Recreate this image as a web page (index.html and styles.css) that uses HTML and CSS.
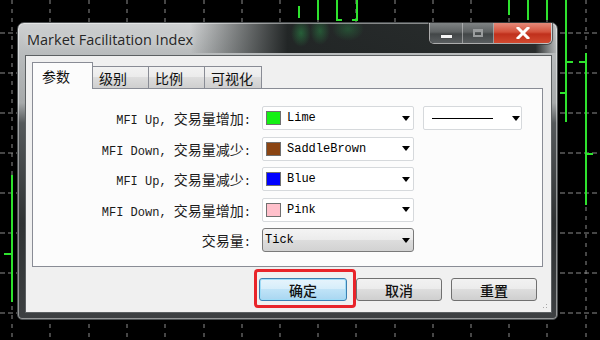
FILE: index.html
```html
<!DOCTYPE html>
<html lang="zh">
<head>
  <meta charset="UTF-8">
  <meta name="viewport" content="width=device-width, initial-scale=1.0">
  <link rel="stylesheet" href="styles.css">
  <title>Market Facilitation Index</title>
</head>
<body>
  <div class="desk">
    <svg class="chart" width="600" height="340" viewBox="0 0 600 340">
      <path class="grid-v" d="M12 0V340M50 0V340M89 0V340M127 0V340M165 0V340M204 0V340M242 0V340M280 0V340M318 0V340M356 0V340M395 0V340M433 0V340M471 0V340M509 0V340M547 0V340M586 0V340"/>
      <path class="grid-h" d="M0 33H600M0 73H600M0 113H600M0 153H600M0 193H600M0 233H600M0 273H600M0 313H600"/>
      <path class="bars" d="M299 6V18M318 0V20M337 0V20H342M357 0V20H352M509 0V15M528 0V20M547 0V20M566 0V122M566 62H573M560 93H566M586 53V205M579 62H586M586 154H593M12 175V302M4 254H12"/>
    </svg>

    <div class="window">
      <div class="titlebar">
        <span class="title">Market Facilitation Index</span>
        <div class="caption">
          <span class="capBtn capMin"><i></i></span>
          <span class="capBtn capMax"><i></i></span>
          <span class="capBtn capClose">
            <svg width="14" height="12" viewBox="0 0 14 12"><path d="M2 1L12 11M12 1L2 11"/></svg>
          </span>
        </div>
      </div>

      <div class="client">
        <div class="tabs">
          <span class="tab active">参数</span>
          <span class="tab">级别</span>
          <span class="tab">比例</span>
          <span class="tab wide">可视化</span>
        </div>

        <div class="panel">
          <div class="row">
            <label class="lbl"><span class="lat">MFI Up, </span>交易量增加<span class="lat">:</span></label>
            <div class="combo">
              <span class="swatch lime"></span><span class="val">Lime</span><span class="arrow"></span>
            </div>
            <div class="combo lineCombo">
              <span class="line"></span><span class="arrow"></span>
            </div>
          </div>
          <div class="row">
            <label class="lbl"><span class="lat">MFI Down, </span>交易量减少<span class="lat">:</span></label>
            <div class="combo">
              <span class="swatch brown"></span><span class="val">SaddleBrown</span><span class="arrow"></span>
            </div>
          </div>
          <div class="row">
            <label class="lbl"><span class="lat">MFI Up, </span>交易量减少<span class="lat">:</span></label>
            <div class="combo">
              <span class="swatch blue"></span><span class="val">Blue</span><span class="arrow"></span>
            </div>
          </div>
          <div class="row">
            <label class="lbl"><span class="lat">MFI Down, </span>交易量增加<span class="lat">:</span></label>
            <div class="combo">
              <span class="swatch pink"></span><span class="val">Pink</span><span class="arrow"></span>
            </div>
          </div>
          <div class="row">
            <label class="lbl">交易量<span class="lat">:</span></label>
            <div class="combo readonly">
              <span class="val">Tick</span><span class="arrow"></span>
            </div>
          </div>
        </div>

        <div class="buttons">
          <button class="btn default">确定<span class="mark"></span></button>
          <button class="btn">取消</button>
          <button class="btn">重置</button>
        </div>
        <span class="grip"></span>
      </div>
    </div>
  </div>
</body>
</html>
```

FILE: styles.css
```css
* {
  box-sizing: border-box;
}

body {
  margin: 0;
  background-color: #000;
  font-family: "Noto Sans CJK SC", "Liberation Sans", sans-serif;
}

.desk {
  position: relative;
  width: 600px;
  height: 340px;
  overflow: hidden;
  padding: 22px 0 0 17px;
}

.chart {
  position: absolute;
  left: 0;
  top: 0;
}

.grid-v {
  stroke: #8c8c8c;
  stroke-width: 1;
  stroke-dasharray: 4 5;
}

.grid-h {
  stroke: #8c8c8c;
  stroke-width: 1;
  stroke-dasharray: 5 3;
}

.bars {
  stroke: #2ee22e;
  stroke-width: 2;
  fill: none;
}

/* window frame */

.window {
  position: relative;
  width: 541px;
  height: 298px;
  padding: 0 5px 6px 7px;
  border: 1px solid #4a4e50;
  border-radius: 7px 7px 5px 5px;
  box-shadow: inset 0 0 0 1px rgba(255, 255, 255, 0.45);
  background:
    radial-gradient(ellipse 10px 14px at 283px 10px, rgba(46, 200, 90, 0.35), transparent),
    radial-gradient(ellipse 10px 14px at 302px 8px, rgba(46, 200, 90, 0.3), transparent),
    radial-gradient(ellipse 16px 12px at 330px 6px, rgba(46, 200, 90, 0.25), transparent),
    linear-gradient(90deg, rgba(0, 0, 0, 0) 32%, rgba(22, 26, 26, 0.93) 50%, rgba(24, 28, 28, 0.9) 96%, rgba(0, 0, 0, 0) 100%) 0 0 / 100% 30px no-repeat,
    linear-gradient(180deg, #cfd1d2 0, #b9bcbd 30px, #a6a9aa 80px, #55595b 100px, #2f3233 200px, #3d4042 100%);
}

.titlebar {
  display: flex;
  justify-content: space-between;
  height: 32px;
}

.title {
  padding: 7px 0 0 2px;
  font-family: "Open Sans", sans-serif;
  font-size: 14.5px;
  color: #262626;
  text-shadow: 0 0 6px rgba(255, 255, 255, 0.6);
}

.caption {
  display: flex;
  height: 21px;
  border: 1px solid rgba(230, 230, 230, 0.7);
  border-top: none;
  border-radius: 0 0 5px 5px;
  overflow: hidden;
  box-shadow: 0 0 0 1px rgba(40, 40, 40, 0.6);
}

.capBtn {
  display: flex;
  align-items: center;
  justify-content: center;
  height: 100%;
}

.capMin,
.capMax {
  width: 33px;
  border-right: 1px solid rgba(220, 220, 220, 0.5);
  background: linear-gradient(180deg, #7f8384 0, #5e6263 45%, #434748 55%, #5a5e60 100%);
}

.capMax {
  width: 31px;
}

.capMin i {
  display: block;
  width: 11px;
  height: 3px;
  margin-top: 6px;
  background: #f4f4f4;
  box-shadow: 0 0 1px #222;
}

.capMax i {
  display: block;
  width: 10px;
  height: 8px;
  border: 2px solid #9a9d9e;
  border-top-width: 3px;
}

.capClose {
  width: 57px;
  background: linear-gradient(180deg, #e58a7a 0, #d4523c 45%, #c0301c 55%, #d24a30 100%);
}

.capClose svg path {
  stroke: #fff;
  stroke-width: 3;
  stroke-linecap: square;
}

/* client area */

.client {
  position: relative;
  height: 258px;
  border: 1px solid #5c6062;
  background-color: #f0f0f0;
}

.tabs {
  display: flex;
  align-items: flex-end;
  height: 26px;
  margin: 6px 0 0 6px;
}

.tab {
  width: 56px;
  height: 22px;
  padding: 1px 0 0 6px;
  border: 1px solid #898c95;
  border-bottom: none;
  border-left: none;
  background: linear-gradient(180deg, #f2f2f2 0, #ebebeb 50%, #dddddd 50%, #cfcfcf 100%);
  font-size: 14px;
  line-height: 20px;
  color: #111;
}

.tab.wide {
  width: 57px;
}

.tab.active {
  position: relative;
  z-index: 1;
  width: 61px;
  height: 27px;
  margin-bottom: -1px;
  padding: 3px 0 0 9px;
  border-left: 1px solid #898c95;
  background: #fcfcfc;
}

.panel {
  display: flex;
  flex-direction: column;
  gap: 6.5px;
  width: 511px;
  height: 179px;
  margin-left: 6px;
  padding-top: 17px;
  border: 1px solid #898c95;
  background-color: #fcfcfc;
}

.row {
  display: flex;
  align-items: center;
  height: 24px;
}

.lbl {
  width: 218px;
  margin-right: 11px;
  text-align: right;
  font-size: 14px;
  color: #1a1a1a;
  white-space: pre;
}

.lat {
  font-family: "Liberation Mono", monospace;
  font-size: 12px;
}

.combo {
  display: flex;
  align-items: center;
  width: 152px;
  height: 24px;
  padding: 0 3px 0 3px;
  border: 1px solid #d6d9dc;
  border-radius: 2px;
  background-color: #fff;
}

.combo.readonly {
  padding-left: 2px;
  border-color: #7a7a7a;
  border-radius: 3px;
  background: linear-gradient(180deg, #f4f4f4 0, #ebebeb 50%, #dddddd 50%, #d2d2d2 100%);
}

.lineCombo {
  width: 99px;
  margin-left: 9px;
  padding: 0 1px 0 8px;
}

.line {
  width: 61px;
  height: 1px;
  background-color: #000;
}

.swatch {
  width: 15px;
  height: 14px;
  margin-right: 6px;
  border: 1px solid #707070;
}

.lime { background-color: #14f014; }
.brown { background-color: #8b4513; }
.blue { background-color: #0000ff; }
.pink { background-color: #ffc0cb; }

.val {
  font-family: "Liberation Mono", monospace;
  font-size: 12px;
  color: #000;
}

.arrow {
  margin-left: auto;
  width: 0;
  height: 0;
  border-top: 5px solid #000;
  border-left: 4px solid transparent;
  border-right: 4px solid transparent;
}

/* bottom buttons */

.buttons {
  display: flex;
  justify-content: flex-end;
  gap: 9px;
  margin-top: 11px;
  padding-right: 14px;
}

.btn {
  position: relative;
  width: 86px;
  height: 23px;
  padding: 0;
  border: 1px solid #707070;
  border-radius: 3px;
  background: linear-gradient(180deg, #f2f2f2 0, #ebebeb 50%, #dddddd 50%, #cfcfcf 100%);
  font-family: "Noto Sans CJK SC", sans-serif;
  font-size: 14px;
  font-weight: 500;
  line-height: 20px;
  color: #111;
}

.btn.default {
  width: 88px;
  border-color: #3c7fb1;
  box-shadow: inset 0 0 0 1px #9fdcf7;
  background: linear-gradient(180deg, #e6f4fc 0, #d5edfa 50%, #bfe3f7 50%, #a9d6f1 100%);
}

.mark {
  position: absolute;
  left: -6px;
  right: -10px;
  top: -10px;
  bottom: -8px;
  border: 3px solid #e8242a;
  border-radius: 4px;
}

.grip {
  position: absolute;
  right: 2px;
  bottom: 2px;
  width: 10px;
  height: 10px;
  background-image: radial-gradient(circle, #a8a8a8 0.8px, transparent 1px);
  background-size: 3px 3px;
  clip-path: polygon(100% 0, 100% 100%, 0 100%);
}
```
